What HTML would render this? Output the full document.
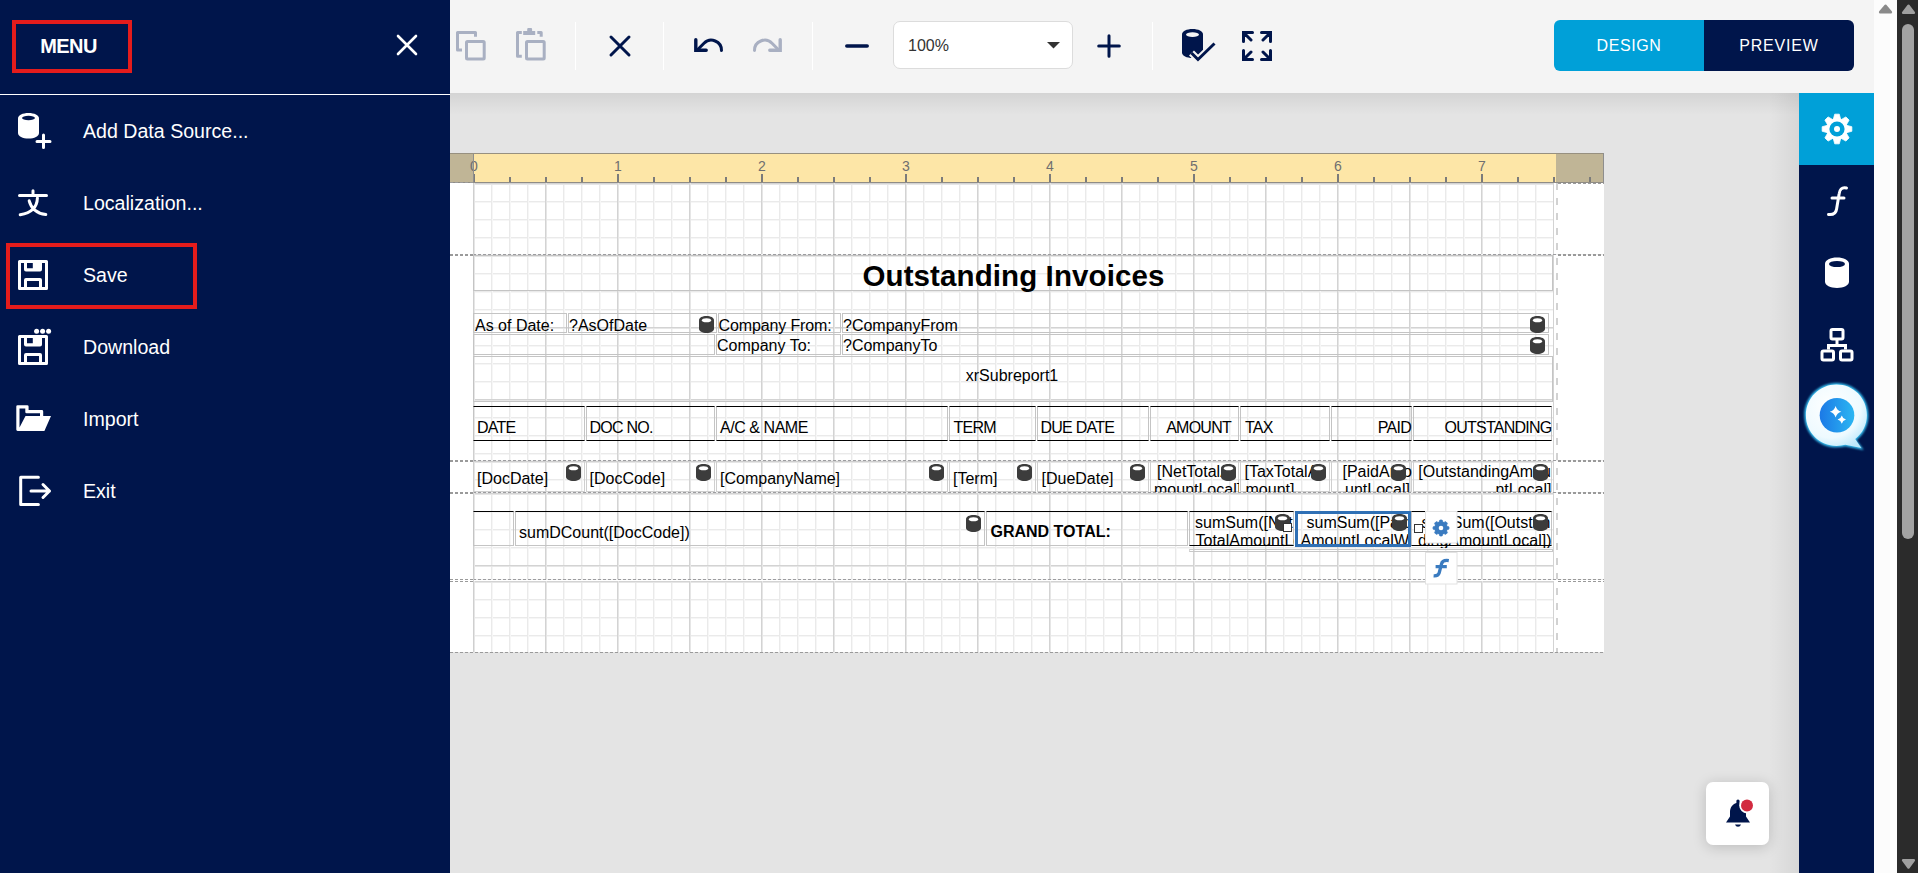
<!DOCTYPE html><html><head><meta charset="utf-8"><style>
*{box-sizing:border-box;margin:0;padding:0}
html,body{width:1918px;height:873px;overflow:hidden;background:#e4e4e4;font-family:"Liberation Sans",sans-serif}
.a{position:absolute}
.mi{position:absolute;color:#fff;font-size:19.6px;left:83px;line-height:22px;white-space:nowrap}
.sep{position:absolute;width:1px;height:48px;top:22px;background:#fff}
.band{position:absolute;left:473px;width:1081px;
 background-image:linear-gradient(to right,#d3d3d3 0,#d3d3d3 1px,#e6e6e6 1px,#e6e6e6 2px,transparent 2px),linear-gradient(to bottom,#d3d3d3 0,#d3d3d3 1px,#e6e6e6 1px,#e6e6e6 2px,transparent 2px),linear-gradient(to right,#eaeaea 0,#eaeaea 1px,#f6f6f6 1px,#f6f6f6 2px,transparent 2px),linear-gradient(to bottom,#eaeaea 0,#eaeaea 1px,#f6f6f6 1px,#f6f6f6 2px,transparent 2px);
 background-size:72px 100%,100% 72px,18px 100%,100% 18px;background-position:0 0,0 0,0 0,0 0}
.c{position:absolute;border:1px solid #c4c4c4;font-size:16px;color:#000;white-space:nowrap;overflow:hidden;line-height:19px}
.db{position:absolute;width:15px;height:17px}
</style></head><body>
<div class="a" style="left:450px;top:93px;width:1349px;height:780px;background:#e4e4e4"></div>
<div class="a" style="left:1769px;top:93px;width:30px;height:780px;background:linear-gradient(to right,rgba(0,0,0,0),rgba(0,0,0,0.06))"></div>
<div class="a" style="left:450px;top:93px;width:1349px;height:22px;background:linear-gradient(to bottom,rgba(0,0,0,0.07),rgba(0,0,0,0))"></div>
<div class="a" style="left:450px;top:183px;width:1154px;height:469px;background:#fff"></div>
<div class="a" style="left:450px;top:153px;width:1154px;height:30px;background:#fde6a7;border-top:1px solid #979080;border-bottom:1px solid #8f8c86"></div>
<div class="a" style="left:450px;top:154px;width:23px;height:28px;background:#c0b596"></div>
<div class="a" style="left:1556px;top:154px;width:47px;height:28px;background:#c0b596"></div>
<div class="a" style="left:1603px;top:153px;width:1px;height:30px;background:#8e8e8e"></div>
<div class="a" style="left:473px;top:174px;width:2px;height:8px;background:#7b7b7b"></div>
<div class="a" style="left:463px;top:158px;width:22px;text-align:center;font-size:14px;color:#6f6f6f;line-height:16px">0</div>
<div class="a" style="left:509px;top:177px;width:2px;height:5px;background:#7b7b7b"></div>
<div class="a" style="left:545px;top:177px;width:2px;height:5px;background:#7b7b7b"></div>
<div class="a" style="left:581px;top:177px;width:2px;height:5px;background:#7b7b7b"></div>
<div class="a" style="left:617px;top:174px;width:2px;height:8px;background:#7b7b7b"></div>
<div class="a" style="left:607px;top:158px;width:22px;text-align:center;font-size:14px;color:#6f6f6f;line-height:16px">1</div>
<div class="a" style="left:653px;top:177px;width:2px;height:5px;background:#7b7b7b"></div>
<div class="a" style="left:689px;top:177px;width:2px;height:5px;background:#7b7b7b"></div>
<div class="a" style="left:725px;top:177px;width:2px;height:5px;background:#7b7b7b"></div>
<div class="a" style="left:761px;top:174px;width:2px;height:8px;background:#7b7b7b"></div>
<div class="a" style="left:751px;top:158px;width:22px;text-align:center;font-size:14px;color:#6f6f6f;line-height:16px">2</div>
<div class="a" style="left:797px;top:177px;width:2px;height:5px;background:#7b7b7b"></div>
<div class="a" style="left:833px;top:177px;width:2px;height:5px;background:#7b7b7b"></div>
<div class="a" style="left:869px;top:177px;width:2px;height:5px;background:#7b7b7b"></div>
<div class="a" style="left:905px;top:174px;width:2px;height:8px;background:#7b7b7b"></div>
<div class="a" style="left:895px;top:158px;width:22px;text-align:center;font-size:14px;color:#6f6f6f;line-height:16px">3</div>
<div class="a" style="left:941px;top:177px;width:2px;height:5px;background:#7b7b7b"></div>
<div class="a" style="left:977px;top:177px;width:2px;height:5px;background:#7b7b7b"></div>
<div class="a" style="left:1013px;top:177px;width:2px;height:5px;background:#7b7b7b"></div>
<div class="a" style="left:1049px;top:174px;width:2px;height:8px;background:#7b7b7b"></div>
<div class="a" style="left:1039px;top:158px;width:22px;text-align:center;font-size:14px;color:#6f6f6f;line-height:16px">4</div>
<div class="a" style="left:1085px;top:177px;width:2px;height:5px;background:#7b7b7b"></div>
<div class="a" style="left:1121px;top:177px;width:2px;height:5px;background:#7b7b7b"></div>
<div class="a" style="left:1157px;top:177px;width:2px;height:5px;background:#7b7b7b"></div>
<div class="a" style="left:1193px;top:174px;width:2px;height:8px;background:#7b7b7b"></div>
<div class="a" style="left:1183px;top:158px;width:22px;text-align:center;font-size:14px;color:#6f6f6f;line-height:16px">5</div>
<div class="a" style="left:1229px;top:177px;width:2px;height:5px;background:#7b7b7b"></div>
<div class="a" style="left:1265px;top:177px;width:2px;height:5px;background:#7b7b7b"></div>
<div class="a" style="left:1301px;top:177px;width:2px;height:5px;background:#7b7b7b"></div>
<div class="a" style="left:1337px;top:174px;width:2px;height:8px;background:#7b7b7b"></div>
<div class="a" style="left:1327px;top:158px;width:22px;text-align:center;font-size:14px;color:#6f6f6f;line-height:16px">6</div>
<div class="a" style="left:1373px;top:177px;width:2px;height:5px;background:#7b7b7b"></div>
<div class="a" style="left:1409px;top:177px;width:2px;height:5px;background:#7b7b7b"></div>
<div class="a" style="left:1445px;top:177px;width:2px;height:5px;background:#7b7b7b"></div>
<div class="a" style="left:1481px;top:174px;width:2px;height:8px;background:#7b7b7b"></div>
<div class="a" style="left:1471px;top:158px;width:22px;text-align:center;font-size:14px;color:#6f6f6f;line-height:16px">7</div>
<div class="a" style="left:1517px;top:177px;width:2px;height:5px;background:#7b7b7b"></div>
<div class="a" style="left:1553px;top:177px;width:2px;height:5px;background:#7b7b7b"></div>
<div class="a" style="left:1589px;top:177px;width:2px;height:5px;background:#7b7b7b"></div>
<div class="a" style="left:473px;top:154px;width:1px;height:28px;background:#8e8e8e"></div>
<div class="band" style="top:183px;height:71px"></div>
<div class="band" style="top:255px;height:205px"></div>
<div class="band" style="top:461px;height:31px"></div>
<div class="band" style="top:493px;height:86px"></div>
<div class="band" style="top:581px;height:71px"></div>
<div class="a" style="left:1556px;top:183px;width:2px;height:469px;background:repeating-linear-gradient(to bottom,#d2d2d2 0,#d2d2d2 7px,transparent 7px,transparent 15px)"></div>
<div class="a" style="left:473px;top:254px;width:1131px;height:1px;background:repeating-linear-gradient(to right,#9d9da0 0,#9d9da0 3px,#f0f0f0 3px,#f0f0f0 5px)"></div>
<div class="a" style="left:473px;top:460px;width:1131px;height:1px;background:repeating-linear-gradient(to right,#9d9da0 0,#9d9da0 3px,#f0f0f0 3px,#f0f0f0 5px)"></div>
<div class="a" style="left:473px;top:492px;width:1131px;height:1px;background:repeating-linear-gradient(to right,#9d9da0 0,#9d9da0 3px,#f0f0f0 3px,#f0f0f0 5px)"></div>
<div class="a" style="left:473px;top:579px;width:1131px;height:1px;background:repeating-linear-gradient(to right,#9d9da0 0,#9d9da0 3px,#f0f0f0 3px,#f0f0f0 5px)"></div>
<div class="a" style="left:450px;top:254px;width:23px;height:2px;background:repeating-linear-gradient(to right,#9a9a9a 0,#9a9a9a 3px,transparent 3px,transparent 5px)"></div>
<div class="a" style="left:450px;top:460px;width:23px;height:2px;background:repeating-linear-gradient(to right,#9a9a9a 0,#9a9a9a 3px,transparent 3px,transparent 5px)"></div>
<div class="a" style="left:450px;top:492px;width:23px;height:2px;background:repeating-linear-gradient(to right,#9a9a9a 0,#9a9a9a 3px,transparent 3px,transparent 5px)"></div>
<div class="a" style="left:450px;top:182px;width:23px;height:1px;background:repeating-linear-gradient(to right,#9a9a9a 0,#9a9a9a 3px,transparent 3px,transparent 5px)"></div>
<div class="a" style="left:450px;top:579px;width:23px;height:1px;background:repeating-linear-gradient(to right,#9a9a9a 0,#9a9a9a 3px,transparent 3px,transparent 5px)"></div>
<div class="a" style="left:450px;top:581px;width:23px;height:1px;background:repeating-linear-gradient(to right,#9a9a9a 0,#9a9a9a 3px,transparent 3px,transparent 5px)"></div>
<div class="a" style="left:1558px;top:183px;width:46px;height:1px;background:repeating-linear-gradient(to right,#9a9a9a 0,#9a9a9a 3px,transparent 3px,transparent 5px)"></div>
<div class="a" style="left:1558px;top:254px;width:46px;height:2px;background:repeating-linear-gradient(to right,#9a9a9a 0,#9a9a9a 3px,transparent 3px,transparent 5px)"></div>
<div class="a" style="left:1558px;top:460px;width:46px;height:2px;background:repeating-linear-gradient(to right,#9a9a9a 0,#9a9a9a 3px,transparent 3px,transparent 5px)"></div>
<div class="a" style="left:1558px;top:492px;width:46px;height:2px;background:repeating-linear-gradient(to right,#9a9a9a 0,#9a9a9a 3px,transparent 3px,transparent 5px)"></div>
<div class="a" style="left:1558px;top:579px;width:46px;height:1px;background:repeating-linear-gradient(to right,#9a9a9a 0,#9a9a9a 3px,transparent 3px,transparent 5px)"></div>
<div class="a" style="left:1558px;top:581px;width:46px;height:1px;background:repeating-linear-gradient(to right,#9a9a9a 0,#9a9a9a 3px,transparent 3px,transparent 5px)"></div>
<div class="a" style="left:450px;top:652px;width:1154px;height:1px;background:repeating-linear-gradient(to right,#9a9a9a 0,#9a9a9a 3px,transparent 3px,transparent 5px)"></div>
<div class="a" style="left:473px;top:183px;width:1px;height:469px;background:#cfcfcf"></div>
<div class="c" style="left:473px;top:255px;width:1080px;height:36px;"></div>
<div class="a" style="left:613.5px;width:800px;text-align:center;top:258px;font-size:29.5px;line-height:35px;white-space:nowrap;color:#000;font-weight:bold;letter-spacing:0.1px">Outstanding Invoices</div>
<div class="c" style="left:473px;top:313px;width:94px;height:20px;"></div>
<div class="a" style="left:475px;top:316px;font-size:16px;line-height:19px;white-space:nowrap;color:#000;">As of Date:</div>
<div class="c" style="left:568px;top:313px;width:149px;height:20px;"></div>
<div class="a" style="left:569px;top:316px;font-size:16px;line-height:19px;white-space:nowrap;color:#000;">?AsOfDate</div>
<svg class="a" style="left:699px;top:316px" width="15" height="17" viewBox="0 0 15 17"><path d="M0 4.2C0 1.6 3.4 0 7.5 0S15 1.6 15 4.2V12.8C15 15.4 11.6 17 7.5 17S0 15.4 0 12.8Z" fill="#3c3c3c"/><ellipse cx="7.5" cy="4.3" rx="4.6" ry="2" fill="#fff"/></svg>
<div class="c" style="left:718px;top:313px;width:123px;height:20px;"></div>
<div class="a" style="left:718.5px;top:316px;font-size:16px;line-height:19px;white-space:nowrap;color:#000;letter-spacing:-0.12px">Company From:</div>
<div class="c" style="left:842px;top:313px;width:707px;height:20px;"></div>
<div class="a" style="left:843px;top:316px;font-size:16px;line-height:19px;white-space:nowrap;color:#000;">?CompanyFrom</div>
<svg class="a" style="left:1530px;top:316px" width="15" height="17" viewBox="0 0 15 17"><path d="M0 4.2C0 1.6 3.4 0 7.5 0S15 1.6 15 4.2V12.8C15 15.4 11.6 17 7.5 17S0 15.4 0 12.8Z" fill="#3c3c3c"/><ellipse cx="7.5" cy="4.3" rx="4.6" ry="2" fill="#fff"/></svg>
<div class="c" style="left:473px;top:334px;width:242px;height:21px;"></div>
<div class="c" style="left:716px;top:334px;width:125px;height:21px;"></div>
<div class="a" style="left:717px;top:336px;font-size:16px;line-height:19px;white-space:nowrap;color:#000;">Company To:</div>
<div class="c" style="left:842px;top:334px;width:707px;height:21px;"></div>
<div class="a" style="left:843px;top:336px;font-size:16px;line-height:19px;white-space:nowrap;color:#000;">?CompanyTo</div>
<svg class="a" style="left:1530px;top:337px" width="15" height="17" viewBox="0 0 15 17"><path d="M0 4.2C0 1.6 3.4 0 7.5 0S15 1.6 15 4.2V12.8C15 15.4 11.6 17 7.5 17S0 15.4 0 12.8Z" fill="#3c3c3c"/><ellipse cx="7.5" cy="4.3" rx="4.6" ry="2" fill="#fff"/></svg>
<div class="c" style="left:473px;top:356px;width:1080px;height:46px;"></div>
<div class="a" style="left:612px;width:800px;text-align:center;top:366px;font-size:16px;line-height:19px;white-space:nowrap;color:#000;">xrSubreport1</div>
<div class="c" style="left:473px;top:406px;width:112px;height:35px;border-top:1px solid #000;border-bottom:1px solid #000"></div>
<div class="a" style="left:477px;top:418px;font-size:16px;line-height:19px;white-space:nowrap;color:#000;letter-spacing:-0.75px">DATE</div>
<div class="c" style="left:586px;top:406px;width:129px;height:35px;border-top:1px solid #000;border-bottom:1px solid #000"></div>
<div class="a" style="left:589.5px;top:418px;font-size:16px;line-height:19px;white-space:nowrap;color:#000;letter-spacing:-0.75px">DOC NO.</div>
<div class="c" style="left:716px;top:406px;width:232px;height:35px;border-top:1px solid #000;border-bottom:1px solid #000"></div>
<div class="a" style="left:720px;top:418px;font-size:16px;line-height:19px;white-space:nowrap;color:#000;letter-spacing:-0.45px">A/C &amp; NAME</div>
<div class="c" style="left:949px;top:406px;width:87px;height:35px;border-top:1px solid #000;border-bottom:1px solid #000"></div>
<div class="a" style="left:953.5px;top:418px;font-size:16px;line-height:19px;white-space:nowrap;color:#000;letter-spacing:-0.75px">TERM</div>
<div class="c" style="left:1037px;top:406px;width:112px;height:35px;border-top:1px solid #000;border-bottom:1px solid #000"></div>
<div class="a" style="left:1040.5px;top:418px;font-size:16px;line-height:19px;white-space:nowrap;color:#000;letter-spacing:-0.75px">DUE DATE</div>
<div class="c" style="left:1150px;top:406px;width:89px;height:35px;border-top:1px solid #000;border-bottom:1px solid #000"></div>
<div class="a" style="left:631px;width:600px;text-align:right;top:418px;font-size:16px;line-height:19px;white-space:nowrap;color:#000;letter-spacing:-0.75px">AMOUNT</div>
<div class="c" style="left:1240px;top:406px;width:90px;height:35px;border-top:1px solid #000;border-bottom:1px solid #000"></div>
<div class="a" style="left:1245px;top:418px;font-size:16px;line-height:19px;white-space:nowrap;color:#000;letter-spacing:-0.75px">TAX</div>
<div class="c" style="left:1331px;top:406px;width:81px;height:35px;border-top:1px solid #000;border-bottom:1px solid #000"></div>
<div class="a" style="left:811px;width:600px;text-align:right;top:418px;font-size:16px;line-height:19px;white-space:nowrap;color:#000;letter-spacing:-0.75px">PAID</div>
<div class="c" style="left:1413px;top:406px;width:139px;height:35px;border-top:1px solid #000;border-bottom:1px solid #000"></div>
<div class="a" style="left:951.5px;width:600px;text-align:right;top:418px;font-size:16px;line-height:19px;white-space:nowrap;color:#000;letter-spacing:-0.75px">OUTSTANDING</div>
<div class="c" style="left:473px;top:461px;width:112px;height:31px;border-color:#cfcfcf"></div>
<div class="c" style="left:586px;top:461px;width:129px;height:31px;border-color:#cfcfcf"></div>
<div class="c" style="left:716px;top:461px;width:232px;height:31px;border-color:#cfcfcf"></div>
<div class="c" style="left:949px;top:461px;width:87px;height:31px;border-color:#cfcfcf"></div>
<div class="c" style="left:1037px;top:461px;width:112px;height:31px;border-color:#cfcfcf"></div>
<div class="c" style="left:1150px;top:461px;width:89px;height:31px;border-color:#cfcfcf"></div>
<div class="c" style="left:1240px;top:461px;width:90px;height:31px;border-color:#cfcfcf"></div>
<div class="c" style="left:1331px;top:461px;width:81px;height:31px;border-color:#cfcfcf"></div>
<div class="c" style="left:1413px;top:461px;width:139px;height:31px;border-color:#cfcfcf"></div>
<div class="a" style="left:477px;top:469px;font-size:16px;line-height:19px;white-space:nowrap;color:#000;">[DocDate]</div>
<svg class="a" style="left:566px;top:464px" width="15" height="17" viewBox="0 0 15 17"><path d="M0 4.2C0 1.6 3.4 0 7.5 0S15 1.6 15 4.2V12.8C15 15.4 11.6 17 7.5 17S0 15.4 0 12.8Z" fill="#3c3c3c"/><ellipse cx="7.5" cy="4.3" rx="4.6" ry="2" fill="#fff"/></svg>
<div class="a" style="left:589.5px;top:469px;font-size:16px;line-height:19px;white-space:nowrap;color:#000;">[DocCode]</div>
<svg class="a" style="left:696px;top:464px" width="15" height="17" viewBox="0 0 15 17"><path d="M0 4.2C0 1.6 3.4 0 7.5 0S15 1.6 15 4.2V12.8C15 15.4 11.6 17 7.5 17S0 15.4 0 12.8Z" fill="#3c3c3c"/><ellipse cx="7.5" cy="4.3" rx="4.6" ry="2" fill="#fff"/></svg>
<div class="a" style="left:720px;top:469px;font-size:16px;line-height:19px;white-space:nowrap;color:#000;">[CompanyName]</div>
<svg class="a" style="left:929px;top:464px" width="15" height="17" viewBox="0 0 15 17"><path d="M0 4.2C0 1.6 3.4 0 7.5 0S15 1.6 15 4.2V12.8C15 15.4 11.6 17 7.5 17S0 15.4 0 12.8Z" fill="#3c3c3c"/><ellipse cx="7.5" cy="4.3" rx="4.6" ry="2" fill="#fff"/></svg>
<div class="a" style="left:953px;top:469px;font-size:16px;line-height:19px;white-space:nowrap;color:#000;">[Term]</div>
<svg class="a" style="left:1017px;top:464px" width="15" height="17" viewBox="0 0 15 17"><path d="M0 4.2C0 1.6 3.4 0 7.5 0S15 1.6 15 4.2V12.8C15 15.4 11.6 17 7.5 17S0 15.4 0 12.8Z" fill="#3c3c3c"/><ellipse cx="7.5" cy="4.3" rx="4.6" ry="2" fill="#fff"/></svg>
<div class="a" style="left:1041.5px;top:469px;font-size:16px;line-height:19px;white-space:nowrap;color:#000;">[DueDate]</div>
<svg class="a" style="left:1130px;top:464px" width="15" height="17" viewBox="0 0 15 17"><path d="M0 4.2C0 1.6 3.4 0 7.5 0S15 1.6 15 4.2V12.8C15 15.4 11.6 17 7.5 17S0 15.4 0 12.8Z" fill="#3c3c3c"/><ellipse cx="7.5" cy="4.3" rx="4.6" ry="2" fill="#fff"/></svg>
<div class="a" style="left:1150px;top:461px;width:89px;height:31px;overflow:hidden"><div class="a" style="left:-1150px;top:-461px;width:1918px;height:873px"><div class="a" style="left:1157px;top:462px;font-size:16px;line-height:19px;white-space:nowrap;color:#000;">[NetTotalA</div></div></div>
<div class="a" style="left:1150px;top:461px;width:89px;height:31px;overflow:hidden"><div class="a" style="left:-1150px;top:-461px;width:1918px;height:873px"><div class="a" style="left:1154px;top:480px;font-size:16px;line-height:19px;white-space:nowrap;color:#000;">mountLocal]</div></div></div>
<svg class="a" style="left:1221px;top:464px" width="15" height="17" viewBox="0 0 15 17"><path d="M0 4.2C0 1.6 3.4 0 7.5 0S15 1.6 15 4.2V12.8C15 15.4 11.6 17 7.5 17S0 15.4 0 12.8Z" fill="#3c3c3c"/><ellipse cx="7.5" cy="4.3" rx="4.6" ry="2" fill="#fff"/></svg>
<div class="a" style="left:473px;top:461px;width:1080px;height:31px;overflow:hidden"><div class="a" style="left:-473px;top:-461px;width:1918px;height:873px"><div class="a" style="left:1244.5px;top:462px;font-size:16px;line-height:19px;white-space:nowrap;color:#000;">[TaxTotalA</div></div></div>
<div class="a" style="left:473px;top:461px;width:1080px;height:31px;overflow:hidden"><div class="a" style="left:-473px;top:-461px;width:1918px;height:873px"><div class="a" style="left:1245.5px;top:480px;font-size:16px;line-height:19px;white-space:nowrap;color:#000;">mount]</div></div></div>
<svg class="a" style="left:1311px;top:464px" width="15" height="17" viewBox="0 0 15 17"><path d="M0 4.2C0 1.6 3.4 0 7.5 0S15 1.6 15 4.2V12.8C15 15.4 11.6 17 7.5 17S0 15.4 0 12.8Z" fill="#3c3c3c"/><ellipse cx="7.5" cy="4.3" rx="4.6" ry="2" fill="#fff"/></svg>
<div class="a" style="left:473px;top:461px;width:1080px;height:31px;overflow:hidden"><div class="a" style="left:-473px;top:-461px;width:1918px;height:873px"><div class="a" style="left:1342.5px;top:462px;font-size:16px;line-height:19px;white-space:nowrap;color:#000;">[PaidAmo</div></div></div>
<div class="a" style="left:473px;top:461px;width:1080px;height:31px;overflow:hidden"><div class="a" style="left:-473px;top:-461px;width:1918px;height:873px"><div class="a" style="left:810px;width:600px;text-align:right;top:480px;font-size:16px;line-height:19px;white-space:nowrap;color:#000;">untLocal]</div></div></div>
<svg class="a" style="left:1391px;top:464px" width="15" height="17" viewBox="0 0 15 17"><path d="M0 4.2C0 1.6 3.4 0 7.5 0S15 1.6 15 4.2V12.8C15 15.4 11.6 17 7.5 17S0 15.4 0 12.8Z" fill="#3c3c3c"/><ellipse cx="7.5" cy="4.3" rx="4.6" ry="2" fill="#fff"/></svg>
<div class="a" style="left:473px;top:461px;width:1080px;height:31px;overflow:hidden"><div class="a" style="left:-473px;top:-461px;width:1918px;height:873px"><div class="a" style="left:1418.3px;top:462px;font-size:16px;line-height:19px;white-space:nowrap;color:#000;">[OutstandingAmou</div></div></div>
<div class="a" style="left:473px;top:461px;width:1080px;height:31px;overflow:hidden"><div class="a" style="left:-473px;top:-461px;width:1918px;height:873px"><div class="a" style="left:951.5px;width:600px;text-align:right;top:480px;font-size:16px;line-height:19px;white-space:nowrap;color:#000;">ntLocal]</div></div></div>
<svg class="a" style="left:1533px;top:464px" width="15" height="17" viewBox="0 0 15 17"><path d="M0 4.2C0 1.6 3.4 0 7.5 0S15 1.6 15 4.2V12.8C15 15.4 11.6 17 7.5 17S0 15.4 0 12.8Z" fill="#3c3c3c"/><ellipse cx="7.5" cy="4.3" rx="4.6" ry="2" fill="#fff"/></svg>
<div class="c" style="left:473px;top:511px;width:41px;height:35px;border-top:1px solid #000"></div>
<div class="c" style="left:515px;top:511px;width:470px;height:35px;border-top:1px solid #000"></div>
<div class="a" style="left:519px;top:522.5px;font-size:16px;line-height:19px;white-space:nowrap;color:#000;">sumDCount([DocCode])</div>
<svg class="a" style="left:966px;top:515px" width="15" height="17" viewBox="0 0 15 17"><path d="M0 4.2C0 1.6 3.4 0 7.5 0S15 1.6 15 4.2V12.8C15 15.4 11.6 17 7.5 17S0 15.4 0 12.8Z" fill="#3c3c3c"/><ellipse cx="7.5" cy="4.3" rx="4.6" ry="2" fill="#fff"/></svg>
<div class="c" style="left:986px;top:511px;width:202px;height:35px;border-top:1px solid #000"></div>
<div class="a" style="left:990.5px;top:522px;font-size:16px;line-height:19px;white-space:nowrap;color:#000;font-weight:bold">GRAND TOTAL:</div>
<div class="c" style="left:1189px;top:511px;width:105px;height:35px;border-top:1px solid #000;border-bottom:1px solid #000"></div>
<div class="a" style="left:1189px;top:511px;width:364px;height:37px;overflow:hidden"><div class="a" style="left:-1189px;top:-511px;width:1918px;height:873px"><div class="a" style="left:1195px;top:513px;font-size:16px;line-height:19px;white-space:nowrap;color:#000;">sumSum([Net</div></div></div>
<div class="a" style="left:1189px;top:511px;width:105px;height:37px;overflow:hidden"><div class="a" style="left:-1189px;top:-511px;width:1918px;height:873px"><div class="a" style="left:1195.5px;top:531px;font-size:16px;line-height:19px;white-space:nowrap;color:#000;">TotalAmountLocal])</div></div></div>
<svg class="a" style="left:1275px;top:514px" width="15" height="17" viewBox="0 0 15 17"><path d="M0 4.2C0 1.6 3.4 0 7.5 0S15 1.6 15 4.2V12.8C15 15.4 11.6 17 7.5 17S0 15.4 0 12.8Z" fill="#3c3c3c"/><ellipse cx="7.5" cy="4.3" rx="4.6" ry="2" fill="#fff"/></svg>
<div class="a" style="left:1189px;top:549px;width:364px;height:3px;border:1px solid #c8c8c8;border-left-color:#d8d8d8"></div>
<div class="c" style="left:1411px;top:511px;width:141px;height:35px;border-top:1px solid #000;border-bottom:1px solid #000"></div>
<div class="a" style="left:1411px;top:511px;width:141px;height:37px;overflow:hidden"><div class="a" style="left:-1411px;top:-511px;width:1918px;height:873px"><div class="a" style="left:1421.5px;top:513px;font-size:16px;line-height:19px;white-space:nowrap;color:#000;">sumSum([Outstan</div></div></div>
<div class="a" style="left:1411px;top:511px;width:141px;height:37px;overflow:hidden"><div class="a" style="left:-1411px;top:-511px;width:1918px;height:873px"><div class="a" style="left:951.5px;width:600px;text-align:right;top:531px;font-size:16px;line-height:19px;white-space:nowrap;color:#000;">dingAmountLocal])</div></div></div>
<svg class="a" style="left:1533px;top:514px" width="15" height="17" viewBox="0 0 15 17"><path d="M0 4.2C0 1.6 3.4 0 7.5 0S15 1.6 15 4.2V12.8C15 15.4 11.6 17 7.5 17S0 15.4 0 12.8Z" fill="#3c3c3c"/><ellipse cx="7.5" cy="4.3" rx="4.6" ry="2" fill="#fff"/></svg>
<div class="a" style="left:1295px;top:511px;width:116px;height:36px;border:3px solid #2f70b5"></div>
<div class="a" style="left:1298px;top:514px;width:110px;height:30px;overflow:hidden"><div class="a" style="left:-1298px;top:-514px;width:1918px;height:873px"><div class="a" style="left:1306.5px;top:513px;font-size:16px;line-height:19px;white-space:nowrap;color:#000;">sumSum([Paid</div></div></div>
<div class="a" style="left:1298px;top:514px;width:110px;height:30px;overflow:hidden"><div class="a" style="left:-1298px;top:-514px;width:1918px;height:873px"><div class="a" style="left:1300.5px;top:531px;font-size:16px;line-height:19px;white-space:nowrap;color:#000;">AmountLocalWithTax])</div></div></div>
<svg class="a" style="left:1392px;top:514px" width="15" height="17" viewBox="0 0 15 17"><path d="M0 4.2C0 1.6 3.4 0 7.5 0S15 1.6 15 4.2V12.8C15 15.4 11.6 17 7.5 17S0 15.4 0 12.8Z" fill="#3c3c3c"/><ellipse cx="7.5" cy="4.3" rx="4.6" ry="2" fill="#fff"/></svg>
<div class="a" style="left:1283px;top:523px;width:9px;height:9px;border:1px solid #333;background:#fff"></div>
<div class="a" style="left:1414px;top:524px;width:9px;height:9px;border:1px solid #333;background:#fff"></div>
<div class="a" style="left:450px;top:0;width:1424px;height:93px;background:#f4f4f4"></div>
<div class="sep" style="left:575px"></div>
<div class="sep" style="left:663px"></div>
<div class="sep" style="left:812px"></div>
<div class="sep" style="left:1152px"></div>
<div class="a" style="left:893px;top:21px;width:180px;height:48px;background:#fff;border:1px solid #dcdcdc;border-radius:7px"></div>
<div class="a" style="left:908px;top:37px;font-size:16px;color:#333;line-height:18px">100%</div>
<svg class="a" style="left:1047px;top:42px" width="13" height="7"><path d="M0 0H13L6.5 6.5Z" fill="#333"/></svg>
<div class="a" style="left:1554px;top:20px;width:150px;height:51px;background:#00a0d8;border-radius:6px 0 0 6px"></div>
<div class="a" style="left:1704px;top:20px;width:150px;height:51px;background:#00154b;border-radius:0 6px 6px 0"></div>
<div class="a" style="left:1554px;top:37px;width:150px;text-align:center;color:#fff;font-size:16px;line-height:18px;letter-spacing:0.6px">DESIGN</div>
<div class="a" style="left:1704px;top:37px;width:150px;text-align:center;color:#fff;font-size:16px;line-height:18px;letter-spacing:0.8px">PREVIEW</div>
<div class="a" style="left:1799px;top:93px;width:75px;height:780px;background:#00154b"></div>
<div class="a" style="left:1799px;top:93px;width:75px;height:72px;background:#00a0d8"></div>
<div class="a" style="left:1874px;top:0;width:23px;height:873px;background:#fcfcfc"></div>
<div class="a" style="left:1897px;top:0;width:21px;height:873px;background:#2b2b2b"></div>
<svg class="a" style="left:1878px;top:3px" width="15" height="11"><path d="M7.5 2.8L12.8 9.2H2.2Z" fill="#8a8a8a" stroke="#8a8a8a" stroke-width="2.6" stroke-linejoin="round"/></svg>
<svg class="a" style="left:1901px;top:3px" width="15" height="12"><path d="M7.5 2.8L12.8 9.8H2.2Z" fill="#a0a0a0" stroke="#a0a0a0" stroke-width="2.6" stroke-linejoin="round"/></svg>
<svg class="a" style="left:1901px;top:858px" width="15" height="12"><path d="M7.5 9.5L12.8 2.2H2.2Z" fill="#a0a0a0" stroke="#a0a0a0" stroke-width="2.6" stroke-linejoin="round"/></svg>
<div class="a" style="left:1902px;top:24px;width:12px;height:515px;background:#a3a3a3;border-radius:6px"></div>
<div class="a" style="left:1706px;top:782px;width:63px;height:63px;background:#fff;border-radius:7px;box-shadow:0 2px 14px rgba(0,0,0,0.18)"></div>
<div class="a" style="left:0;top:0;width:450px;height:873px;background:#00154b"></div>
<div class="a" style="left:12px;top:20px;width:120px;height:53px;border:4px solid #e41c1c"></div>
<div class="a" style="left:40.3px;top:35px;color:#fff;font-size:20px;font-weight:bold;line-height:22px;letter-spacing:-0.6px">MENU</div>
<div class="a" style="left:0;top:94px;width:450px;height:1px;background:#fff"></div>
<div class="mi" style="top:120px">Add Data Source...</div>
<div class="mi" style="top:192px">Localization...</div>
<div class="mi" style="top:264px">Save</div>
<div class="mi" style="top:336px">Download</div>
<div class="mi" style="top:408px">Import</div>
<div class="mi" style="top:480px">Exit</div>
<div class="a" style="left:6px;top:243px;width:191px;height:66px;border:4.5px solid #e41c1c"></div>
<svg class="a" style="left:0;top:0" width="1918" height="873" viewBox="0 0 1918 873"><path d="M398 36L416 54M416 36L398 54" stroke="#fff" stroke-width="2.6" stroke-linecap="round"/><path d="M18 118.5C18 115.2 22.7 113 28.5 113S39 115.2 39 118.5V133C39 136.4 34.3 138.6 28.5 138.6S18 136.4 18 133Z" fill="#fff"/><ellipse cx="28.5" cy="118" rx="6.5" ry="2.2" fill="#00154b"/><path d="M43.5 135V147.5M37 141.5H50" stroke="#fff" stroke-width="3" stroke-linecap="round"/><path d="M33 190.8V193.5M19.5 195.6H46.5M37.4 198C37.2 205 34 212.5 20.2 214.8M29.2 200.8C31 208 35.5 213 45.8 214.6" stroke="#fff" stroke-width="3" stroke-linecap="round" fill="none"/><path fill="#fff" fill-rule="evenodd" d="M19.5 260H46.5Q48 260 48 261.5V288.5Q48 290 46.5 290H19.5Q18 290 18 288.5V261.5Q18 260 19.5 260Z M21 263V287H24V280Q24 278 26 278H40Q42 278 42 280V287H45V263H42V269.5Q42 271.5 40 271.5H26Q24 271.5 24 269.5V263Z M27 263V268.3H32.8V263Z M27 281V287H39V281Z"/><path fill="#fff" fill-rule="evenodd" d="M19.5 335H46.5Q48 335 48 336.5V363.5Q48 365 46.5 365H19.5Q18 365 18 363.5V336.5Q18 335 19.5 335Z M21 338V362H24V355Q24 353 26 353H40Q42 353 42 355V362H45V338H42V344.5Q42 346.5 40 346.5H26Q24 346.5 24 344.5V338Z M27 338V343.3H32.8V338Z M27 356V362H39V356Z"/><circle cx="36.6" cy="331.2" r="2.5" fill="#fff"/><circle cx="42.6" cy="331.2" r="2.5" fill="#fff"/><circle cx="48.6" cy="331.2" r="2.5" fill="#fff"/><path fill="#fff" d="M17.6 405.2H27.2Q28.6 405.2 28.6 406.6V410H41.8Q43.2 410 43.2 411.4V416H51L44.4 430.9H17.6Q16.3 430.9 16.3 429.5V406.6Q16.3 405.2 17.6 405.2Z M19.5 408.6V427.5L25.5 416H40V413.3H26.6Q25.3 413.3 25.3 412V408.6Z" fill-rule="evenodd"/><path d="M38.4 477.2H20.7V504.6H38.4M31 491H49.5M43 484.5L49.5 491L43 497.5" stroke="#fff" stroke-width="3" stroke-linecap="round" stroke-linejoin="round" fill="none"/><path d="M462 50.1H457.5V32.5H475.5V36.8" stroke="#a9b0c2" stroke-width="3" fill="none" stroke-linejoin="round"/><rect x="466.5" y="41.5" width="17.7" height="17.5" rx="1" stroke="#a9b0c2" stroke-width="3" fill="none"/><path d="M521.8 56.2H517.5V32.5H521.8M537.3 32.5H541.2V36.8" stroke="#a9b0c2" stroke-width="3" fill="none" stroke-linejoin="round"/><path d="M523.2 31H535.2V35.1H523.2Z M527.2 31V29.2Q527.2 28.1 528.3 28.1H531Q532.1 28.1 532.1 29.2V31Z" fill="#a9b0c2"/><rect x="526.5" y="41.5" width="17.7" height="17.5" rx="1" stroke="#a9b0c2" stroke-width="3" fill="none"/><path d="M611 37L629 55M629 37L611 55" stroke="#00154b" stroke-width="3" stroke-linecap="round"/><path d="M721.5 50.5A10.2 10.2 0 0 0 704 43.3L697 50.3" stroke="#00154b" stroke-width="3" stroke-linecap="round" fill="none"/><path d="M695.8 39.7V50.3H706.2" stroke="#00154b" stroke-width="3.4" stroke-linecap="round" stroke-linejoin="miter" fill="none"/><g transform="translate(1476 0) scale(-1 1)"><path d="M721.5 50.5A10.2 10.2 0 0 0 704 43.3L697 50.3" stroke="#a9b0c2" stroke-width="3" stroke-linecap="round" fill="none"/><path d="M695.8 39.7V50.3H706.2" stroke="#a9b0c2" stroke-width="3.4" stroke-linecap="round" fill="none"/></g><path d="M846.8 46H867.2" stroke="#00154b" stroke-width="3.5" stroke-linecap="round"/><path d="M1098.7 46H1119.3M1109 35.7V56.3" stroke="#00154b" stroke-width="3" stroke-linecap="round"/><path d="M1182 34.5C1182 31.2 1186.7 29 1192.5 29S1203 31.2 1203 34.5V52.5C1203 55.8 1198.3 58 1192.5 58S1182 55.8 1182 52.5Z" fill="#00154b"/><ellipse cx="1192.5" cy="34.6" rx="6.5" ry="2.4" fill="#f4f4f4"/><path d="M1191.5 53L1198 59.5L1214.5 43.5" stroke="#f4f4f4" stroke-width="7" fill="none"/><path d="M1191.5 53L1198 59.5L1214.5 43.5" stroke="#00154b" stroke-width="3" fill="none"/><path d="M1243.5 41.5V32.5H1252.5M1244 33L1251 40M1270.5 41.5V32.5H1261.5M1270 33L1263 40M1243.5 50.5V59.5H1252.5M1244 59L1251 52M1270.5 50.5V59.5H1261.5M1270 59L1263 52" stroke="#00154b" stroke-width="3" fill="none" stroke-linecap="round" stroke-linejoin="miter"/><path d="M1833.42 119.02 L1834.73 114.17 L1839.27 114.17 L1840.58 119.02 L1841.53 119.41 L1845.88 116.91 L1849.09 120.12 L1846.59 124.47 L1846.98 125.42 L1851.83 126.73 L1851.83 131.27 L1846.98 132.58 L1846.59 133.53 L1849.09 137.88 L1845.88 141.09 L1841.53 138.59 L1840.58 138.98 L1839.27 143.83 L1834.73 143.83 L1833.42 138.98 L1832.47 138.59 L1828.12 141.09 L1824.91 137.88 L1827.41 133.53 L1827.02 132.58 L1822.17 131.27 L1822.17 126.73 L1827.02 125.42 L1827.41 124.47 L1824.91 120.12 L1828.12 116.91 L1832.47 119.41Z" fill="#fff" stroke="#fff" stroke-width="0.8" stroke-linejoin="round"/><circle cx="1837" cy="129" r="10.6" fill="#fff"/><circle cx="1837" cy="129" r="7.6" fill="#00a0d8"/><circle cx="1837" cy="129" r="3.0" fill="#fff"/><path d="M1846.5 188C1841.5 186.8 1839.6 189.8 1839.1 194L1836.6 209C1836 213.3 1833.2 215 1828.5 214.5M1832 198H1844" stroke="#fff" stroke-width="3" stroke-linecap="round" fill="none"/><path d="M1825 263.8C1825 260.3 1830.4 257.6 1837 257.6S1849 260.3 1849 263.8V281.8C1849 285.3 1843.6 288 1837 288S1825 285.3 1825 281.8Z" fill="#fff"/><ellipse cx="1837" cy="264" rx="8" ry="3.1" fill="#00154b"/><g stroke="#fff" stroke-width="3" fill="none"><rect x="1831" y="329.5" width="12" height="9.5" rx="1.5"/><rect x="1822" y="351" width="11.5" height="9" rx="1.5"/><rect x="1840.5" y="351" width="11.5" height="9" rx="1.5"/><path d="M1837 340V345.5M1828.5 349.5V345.5H1845.5V349.5"/></g><defs><radialGradient id="bub" cx="0.4" cy="0.35" r="0.7"><stop offset="0" stop-color="#ffffff"/><stop offset="0.7" stop-color="#eefaff"/><stop offset="1" stop-color="#bfe9fb"/></radialGradient><linearGradient id="blu" x1="0" y1="0" x2="1" y2="0"><stop offset="0" stop-color="#1c79e6"/><stop offset="1" stop-color="#2bb6f2"/></linearGradient><filter id="glow" x="-30%" y="-30%" width="160%" height="160%"><feGaussianBlur stdDeviation="1.2"/></filter></defs><g transform="translate(1836.5 416) scale(1.045) translate(-1836.5 -416)"><path d="M1836.5 384.5C1853.6 384.5 1867 398 1867 415.2C1867 425 1862.5 433.5 1855.5 439L1862.5 448.5L1845 445C1842.3 445.7 1839.5 446 1836.5 446C1819.4 446 1805.8 432.4 1805.8 415.2S1819.4 384.5 1836.5 384.5Z" fill="#39c3f5" filter="url(#glow)"/><path d="M1836.5 385.8C1852.8 385.8 1865.6 398.6 1865.6 415.2C1865.6 424.6 1861.3 432.6 1854.4 438L1860.3 446.6L1845 443.6C1842.3 444.3 1839.5 444.6 1836.5 444.6C1820.2 444.6 1807.2 431.6 1807.2 415.2S1820.2 385.8 1836.5 385.8Z" fill="url(#bub)"/></g><circle cx="1837" cy="415.2" r="17.3" fill="url(#blu)"/><path d="M1835.6 406.0Q1836.876 410.524 1841.3999999999999 411.8Q1836.876 413.076 1835.6 417.6Q1834.3239999999998 413.076 1829.8 411.8Q1834.3239999999998 410.524 1835.6 406.0Z" fill="#fff"/><path d="M1841.8 415.40000000000003Q1842.724 418.67600000000004 1846.0 419.6Q1842.724 420.524 1841.8 423.8Q1840.876 420.524 1837.6 419.6Q1840.876 418.67600000000004 1841.8 415.40000000000003Z" fill="#fff"/><path d="M1738 799.5C1739 799.5 1739.6 800.3 1739.6 801.3V803C1743.5 804.2 1746 807.6 1746 812V816.5L1750 822.5H1726L1730 816.5V812C1730 807.6 1732.5 804.2 1736.4 803V801.3C1736.4 800.3 1737 799.5 1738 799.5Z" fill="#00154b"/><path d="M1735 824.5H1741Q1740.3 826.8 1738 826.8Q1735.7 826.8 1735 824.5Z" fill="#00154b"/><circle cx="1747" cy="805.6" r="7.8" fill="#fff"/><circle cx="1747" cy="805.6" r="6" fill="#d22b40"/><rect x="1425.5" y="511.5" width="31.5" height="31.5" fill="#fff" stroke="#e2e2e2"/><rect x="1425.5" y="552.5" width="31.5" height="31.5" fill="#fff" stroke="#e2e2e2"/><path d="M1438.64 522.92 L1439.91 520.07 L1442.09 520.07 L1443.36 522.92 L1442.92 522.74 L1445.83 521.63 L1447.37 523.17 L1446.26 526.08 L1446.08 525.64 L1448.93 526.91 L1448.93 529.09 L1446.08 530.36 L1446.26 529.92 L1447.37 532.83 L1445.83 534.37 L1442.92 533.26 L1443.36 533.08 L1442.09 535.93 L1439.91 535.93 L1438.64 533.08 L1439.08 533.26 L1436.17 534.37 L1434.63 532.83 L1435.74 529.92 L1435.92 530.36 L1433.07 529.09 L1433.07 526.91 L1435.92 525.64 L1435.74 526.08 L1434.63 523.17 L1436.17 521.63 L1439.08 522.74Z" fill="#3a7bc0" stroke="#3a7bc0" stroke-width="0.8" stroke-linejoin="round"/><circle cx="1441" cy="528" r="5.6" fill="#3a7bc0"/><circle cx="1441" cy="528" r="2.3" fill="#fff"/><circle cx="1441" cy="528" r="0.01" fill="#3a7bc0"/><path d="M1448.8 560.6C1444.5 560 1442.3 560.6 1441.5 563.8L1439.2 572.8C1438.5 575.4 1436.7 576 1433.6 575.8M1435.6 566.6H1446.8" stroke="#3a7bc0" stroke-width="3.3" fill="none"/></svg>
</body></html>
